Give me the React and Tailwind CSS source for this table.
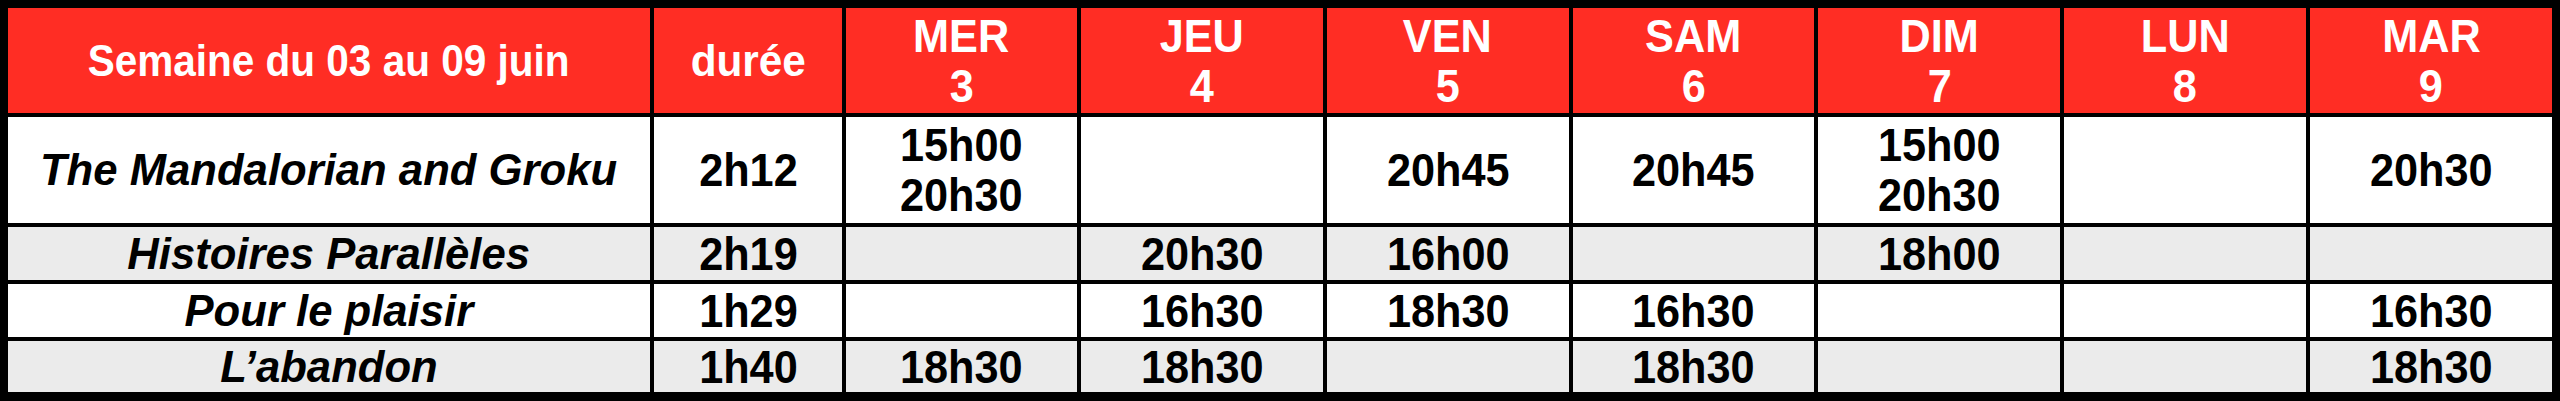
import React from 'react';

const days = [
  { name: 'MER', num: '3' },
  { name: 'JEU', num: '4' },
  { name: 'VEN', num: '5' },
  { name: 'SAM', num: '6' },
  { name: 'DIM', num: '7' },
  { name: 'LUN', num: '8' },
  { name: 'MAR', num: '9' },
];

const films = [
  { title: 'The Mandalorian and Groku', duree: '2h12', shows: [['15h00', '20h30'], [], ['20h45'], ['20h45'], ['15h00', '20h30'], [], ['20h30']] },
  { title: 'Histoires Parallèles', duree: '2h19', shows: [[], ['20h30'], ['16h00'], [], ['18h00'], [], []] },
  { title: 'Pour le plaisir', duree: '1h29', shows: [[], ['16h30'], ['18h30'], ['16h30'], [], [], ['16h30']] },
  { title: 'L’abandon', duree: '1h40', shows: [['18h30'], ['18h30'], [], ['18h30'], [], [], ['18h30']] },
];

// narrow bold look: Liberation Sans squeezed horizontally
function T({ children, squeeze = 'scale-x-94' }) {
  return <span className={`inline-block whitespace-nowrap origin-center ${squeeze}`}>{children}</span>;
}

export default function App() {
  return (
    <div className="w-[2560px] h-[401px] bg-black pt-[8px] pl-[8px] pr-[8px] pb-[9px] font-['Liberation_Sans',Arial,sans-serif] font-bold">
      <div className="grid h-full gap-[4px] grid-cols-[642px_188px_231px_repeat(6,1fr)] grid-rows-[105px_106px_53px_53px_51px]">
        {/* header */}
        <div className="bg-[#ff2d24] text-white flex items-center justify-center text-[45px] leading-[50px]"><T squeeze="scale-x-90">Semaine du 03 au 09 juin</T></div>
        <div className="bg-[#ff2d24] text-white flex items-center justify-center text-[45px] leading-[50px]"><T>durée</T></div>
        {days.map(d => (
          <div key={d.name} className="bg-[#ff2d24] text-white flex flex-col items-center justify-center text-[46px] leading-[50px]">
            <T>{d.name}</T>
            <T>{d.num}</T>
          </div>
        ))}

        {/* films */}
        {films.map((f, i) => {
          const bg = i % 2 === 1 ? 'bg-[#ebebeb]' : 'bg-white';
          return (
            <React.Fragment key={f.title}>
              <div className={`${bg} flex items-center justify-center italic text-[45px] leading-[50px] text-black`}><T squeeze="scale-x-97">{f.title}</T></div>
              <div className={`${bg} flex items-center justify-center text-[46px] leading-[50px] text-black`}><T>{f.duree}</T></div>
              {f.shows.map((s, j) => (
                <div key={j} className={`${bg} flex flex-col items-center justify-center text-[46px] leading-[50px] text-black`}>
                  {s.map(t => <T key={t}>{t}</T>)}
                </div>
              ))}
            </React.Fragment>
          );
        })}
      </div>
    </div>
  );
}
